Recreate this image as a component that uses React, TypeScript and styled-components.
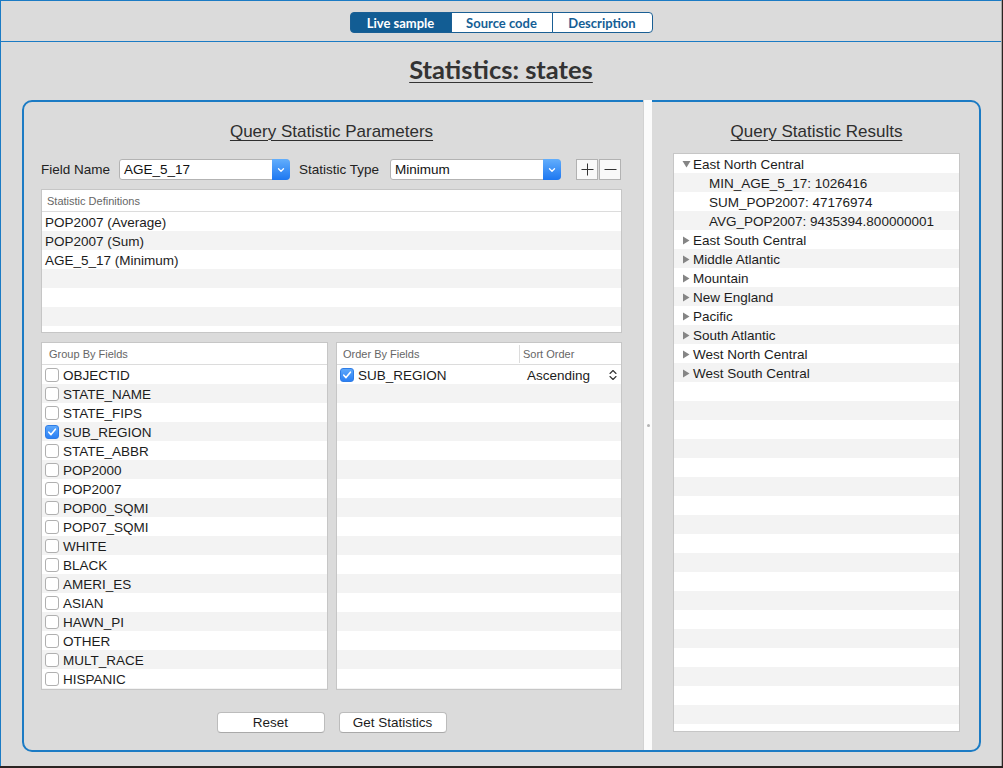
import React from 'react';
import styled, { createGlobalStyle } from 'styled-components';

const Global = createGlobalStyle`
  html, body { margin: 0; padding: 0; background: #2b2422; }
  #root { width: 1003px; height: 768px; }
  * { box-sizing: border-box; }
`;

const BLUE = '#1b7bc4';

const Frame = styled.div`
  width: 1002px;
  height: 766px;
  background: #dbdbdb;
  border-top: 1px solid ${BLUE};
  border-left: 1px solid ${BLUE};
  border-right: 1px solid #a8a8a8;
  display: flex;
  flex-direction: column;
  font-family: "Liberation Sans", Arial, sans-serif;
  color: #1d1d1d;
`;

const Header = styled.div`
  height: 41px;
  border-bottom: 1px solid ${BLUE};
  display: flex;
  justify-content: center;
  padding-top: 11px;
`;

const Tabs = styled.div`
  display: flex;
  height: 21px;
`;

const Tab = styled.div<{ $active?: boolean; $w: number; $pos: 'first' | 'mid' | 'last' }>`
  width: ${(p) => p.$w}px;
  height: 21px;
  margin-left: ${(p) => (p.$pos === 'first' ? 0 : -1)}px;
  border: 1px solid #1a5f94;
  border-radius: ${(p) => (p.$pos === 'first' ? '4px 0 0 4px' : p.$pos === 'last' ? '0 4px 4px 0' : '0')};
  background: ${(p) => (p.$active ? '#125d94' : '#ffffff')};
  color: ${(p) => (p.$active ? '#ffffff' : '#155e95')};
  font-family: Lato, "Liberation Sans", sans-serif;
  font-weight: 700;
  font-size: 13px;
  display: flex;
  align-items: center;
  justify-content: center;
`;

const Title = styled.h1`
  margin: 13px 0 0;
  height: 28px;
  line-height: 28px;
  text-align: center;
  font-family: Lato, "Liberation Sans", sans-serif;
  font-weight: 700;
  font-size: 25.5px;
  color: #333333;
  text-decoration: underline;
  text-underline-offset: 3px;
  text-decoration-thickness: 1px;
`;

const Panel = styled.div`
  margin: 17px 20px 0 21px;
  height: 652px;
  border: 2px solid ${BLUE};
  border-radius: 10px;
  display: flex;
`;

const LeftPane = styled.div`
  width: 619px;
  padding: 19px 21px 0 17px;
  display: flex;
  flex-direction: column;
`;

const Splitter = styled.div`
  width: 9px;
  margin-top: -2px;
  height: 650px;
  background: #fbfbfb;
  border-left: 1px solid #d2d2d2;
  display: flex;
  align-items: center;
  justify-content: center;
  &::after {
    content: '';
    width: 3px;
    height: 3px;
    border-radius: 50%;
    background: #b4b4b4;
  }
`;

const RightPane = styled.div`
  flex: 1;
  padding: 19px 19px 0 21px;
  display: flex;
  flex-direction: column;
`;

const SectionHeading = styled.h2`
  margin: 0;
  height: 20px;
  line-height: 22px;
  text-align: center;
  font-weight: 400;
  font-size: 17px;
  color: #2e2e2e;
  text-decoration: underline;
  text-underline-offset: 3px;
  text-decoration-thickness: 1px;
`;

const FieldRow = styled.div`
  margin-top: 18px;
  height: 21px;
  display: flex;
  align-items: center;
`;

const FieldLabel = styled.span<{ $w: number }>`
  width: ${(p) => p.$w}px;
  font-size: 13.5px;
  color: #222;
  white-space: nowrap;
`;

const SelectBox = styled.div`
  width: 171px;
  height: 21px;
  border: 1px solid #b3b3b3;
  border-radius: 3px 4px 4px 3px;
  background: #fff;
  display: flex;
  align-items: center;
  font-size: 13.5px;
  color: #111;
`;

const SelectText = styled.span`
  flex: 1;
  padding-left: 4px;
`;

const SelectArrow = styled.span`
  width: 18px;
  height: 21px;
  margin: -1px -1px -1px 0;
  border-radius: 0 4px 4px 0;
  background: linear-gradient(#62aefc, #1d77f1);
  display: flex;
  align-items: center;
  justify-content: center;
`;

const Spacer = styled.span<{ $w: number }>`
  width: ${(p) => p.$w}px;
`;

const PlusMinus = styled.div`
  display: flex;
  gap: 1px;
`;

const SquareButton = styled.button`
  width: 22px;
  height: 21px;
  padding: 0;
  border: 1px solid #b2b2b2;
  background: #f9f9f9;
  display: flex;
  align-items: center;
  justify-content: center;
`;

const TableBox = styled.div<{ $h: number }>`
  height: ${(p) => p.$h}px;
  border: 1px solid #c6c6c6;
  background: #fff;
  display: flex;
  flex-direction: column;
  overflow: hidden;
`;

const TableHead = styled.div`
  height: 22px;
  flex: none;
  border-bottom: 1px solid #dcdcdc;
  display: flex;
  align-items: center;
  font-size: 11px;
  color: #666;
`;

const HeadCell = styled.div<{ $w?: number; $pad: number; $sep?: boolean }>`
  ${(p) => (p.$w ? `width: ${p.$w}px;` : 'flex: 1;')}
  padding-left: ${(p) => p.$pad}px;
  height: 18px;
  display: flex;
  align-items: center;
  ${(p) => (p.$sep ? 'border-left: 1px solid #dcdcdc;' : '')}
`;

const Striped = styled.div`
  flex: 1;
  background: repeating-linear-gradient(to bottom, #ffffff 0 19px, #f3f3f3 19px 38px);
`;

const Row = styled.div<{ $pad: number }>`
  height: 19px;
  display: flex;
  align-items: center;
  padding-top: 1px;
  padding-left: ${(p) => p.$pad}px;
  font-size: 13.5px;
  color: #1c1c1c;
  white-space: nowrap;
`;

const DefsTable = styled(TableBox)`
  margin-top: 9px;
`;

const BottomTables = styled.div`
  margin-top: 9px;
  display: grid;
  grid-template-columns: 287px 286px;
  gap: 8px;
`;

const Box = styled.span<{ $checked?: boolean }>`
  width: 14px;
  height: 14px;
  flex: none;
  margin-top: -1px;
  border-radius: 3px;
  border: 1px solid ${(p) => (p.$checked ? '#2f7de6' : '#b0b0b0')};
  background: ${(p) => (p.$checked ? 'linear-gradient(#5ea8fb, #2b80f4)' : '#ffffff')};
  display: flex;
  align-items: center;
  justify-content: center;
  margin-right: 4px;
`;

const SortCell = styled.span`
  margin-left: auto;
  width: 101px;
  display: flex;
  align-items: center;
  padding-left: 7px;
  padding-right: 4px;
  justify-content: space-between;
`;

const ButtonRow = styled.div`
  margin-top: 22px;
  display: flex;
  justify-content: center;
  gap: 14px;
`;

const PushButton = styled.button`
  width: 108px;
  height: 21px;
  padding: 0;
  border: 1px solid #bcbcbc;
  border-bottom-color: #a9a9a9;
  border-radius: 4px;
  background: #ffffff;
  font-family: "Liberation Sans", Arial, sans-serif;
  font-size: 13.5px;
  color: #1c1c1c;
`;

const ResultsTable = styled(TableBox)`
  margin-top: 12px;
`;

const Toggle = styled.span`
  width: 11px;
  display: flex;
  align-items: center;
`;

const Check = () => (
  <svg width="10" height="10" viewBox="0 0 10 10">
    <path d="M1.8 5.2 L4 7.6 L8.4 2.2" fill="none" stroke="#fff" strokeWidth="1.6" strokeLinecap="round" strokeLinejoin="round" />
  </svg>
);

const Checkbox = ({ checked }: { checked?: boolean }) => <Box $checked={checked}>{checked && <Check />}</Box>;

const Chevron = () => (
  <svg width="8" height="6" viewBox="0 0 8 6">
    <path d="M1.5 1.8 L4 4.2 L6.5 1.8" fill="none" stroke="#fff" strokeWidth="1.3" strokeLinecap="round" strokeLinejoin="round" />
  </svg>
);

const UpDown = () => (
  <svg width="8" height="12" viewBox="0 0 8 12">
    <path d="M1 4.5 L4 1.5 L7 4.5 M1 7.5 L4 10.5 L7 7.5" fill="none" stroke="#333" strokeWidth="1.1" strokeLinecap="round" strokeLinejoin="round" />
  </svg>
);

const Down = () => (
  <svg width="9" height="8" viewBox="0 0 9 8">
    <path d="M0.5 1 L8.5 1 L4.5 7.5 Z" fill="#858585" />
  </svg>
);

const Right = () => (
  <svg width="8" height="9" viewBox="0 0 8 9">
    <path d="M1 0.5 L7.5 4.5 L1 8.5 Z" fill="#858585" />
  </svg>
);

const groupFields = [
  'OBJECTID', 'STATE_NAME', 'STATE_FIPS', 'SUB_REGION', 'STATE_ABBR', 'POP2000', 'POP2007',
  'POP00_SQMI', 'POP07_SQMI', 'WHITE', 'BLACK', 'AMERI_ES', 'ASIAN', 'HAWN_PI', 'OTHER',
  'MULT_RACE', 'HISPANIC',
];

const definitions = ['POP2007 (Average)', 'POP2007 (Sum)', 'AGE_5_17 (Minimum)'];

const regions = [
  'East South Central', 'Middle Atlantic', 'Mountain', 'New England', 'Pacific',
  'South Atlantic', 'West North Central', 'West South Central',
];

const children = ['MIN_AGE_5_17: 1026416', 'SUM_POP2007: 47176974', 'AVG_POP2007: 9435394.800000001'];

export default function App() {
  return (
    <>
      <Global />
      <Frame>
        <Header>
          <Tabs>
            <Tab $active $w={102} $pos="first">Live sample</Tab>
            <Tab $w={102} $pos="mid">Source code</Tab>
            <Tab $w={101} $pos="last">Description</Tab>
          </Tabs>
        </Header>
        <Title>Statistics: states</Title>
        <Panel>
          <LeftPane>
            <SectionHeading>Query Statistic Parameters</SectionHeading>
            <FieldRow>
              <FieldLabel $w={78}>Field Name</FieldLabel>
              <SelectBox>
                <SelectText>AGE_5_17</SelectText>
                <SelectArrow><Chevron /></SelectArrow>
              </SelectBox>
              <Spacer $w={9} />
              <FieldLabel $w={91}>Statistic Type</FieldLabel>
              <SelectBox>
                <SelectText>Minimum</SelectText>
                <SelectArrow><Chevron /></SelectArrow>
              </SelectBox>
              <Spacer $w={15} />
              <PlusMinus>
                <SquareButton aria-label="add">
                  <svg width="13" height="13" viewBox="0 0 13 13">
                    <path d="M6.5 0.5 V12.5 M0.5 6.5 H12.5" stroke="#333" strokeWidth="1" />
                  </svg>
                </SquareButton>
                <SquareButton aria-label="remove">
                  <svg width="13" height="13" viewBox="0 0 13 13">
                    <path d="M0.5 6.5 H12.5" stroke="#333" strokeWidth="1" />
                  </svg>
                </SquareButton>
              </PlusMinus>
            </FieldRow>

            <DefsTable $h={144}>
              <TableHead>
                <HeadCell $pad={5}>Statistic Definitions</HeadCell>
              </TableHead>
              <Striped>
                {definitions.map((d) => (
                  <Row key={d} $pad={3}>{d}</Row>
                ))}
              </Striped>
            </DefsTable>

            <BottomTables>
              <TableBox $h={348}>
                <TableHead>
                  <HeadCell $pad={7}>Group By Fields</HeadCell>
                </TableHead>
                <Striped>
                  {groupFields.map((f) => (
                    <Row key={f} $pad={3}>
                      <Checkbox checked={f === 'SUB_REGION'} />
                      {f}
                    </Row>
                  ))}
                </Striped>
              </TableBox>
              <TableBox $h={348}>
                <TableHead>
                  <HeadCell $w={182} $pad={6}>Order By Fields</HeadCell>
                  <HeadCell $sep $pad={3}>Sort Order</HeadCell>
                </TableHead>
                <Striped>
                  <Row $pad={3}>
                    <Checkbox checked />
                    SUB_REGION
                    <SortCell>
                      Ascending
                      <UpDown />
                    </SortCell>
                  </Row>
                </Striped>
              </TableBox>
            </BottomTables>

            <ButtonRow>
              <PushButton>Reset</PushButton>
              <PushButton>Get Statistics</PushButton>
            </ButtonRow>
          </LeftPane>

          <Splitter />

          <RightPane>
            <SectionHeading>Query Statistic Results</SectionHeading>
            <ResultsTable $h={579}>
              <Striped>
                <Row $pad={8}>
                  <Toggle><Down /></Toggle>
                  East North Central
                </Row>
                {children.map((c) => (
                  <Row key={c} $pad={35}>{c}</Row>
                ))}
                {regions.map((r) => (
                  <Row key={r} $pad={8}>
                    <Toggle><Right /></Toggle>
                    {r}
                  </Row>
                ))}
              </Striped>
            </ResultsTable>
          </RightPane>
        </Panel>
      </Frame>
    </>
  );
}
